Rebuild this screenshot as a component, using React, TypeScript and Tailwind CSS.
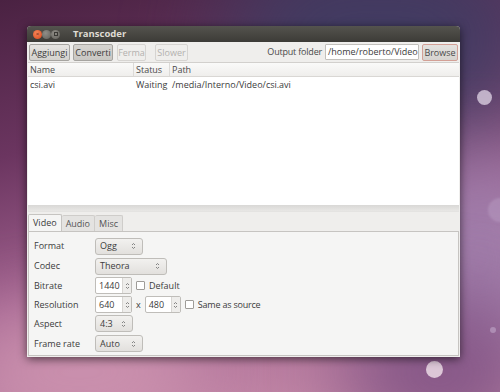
import React from "react";

const font = { fontFamily: '"Open Sans", "DejaVu Sans", sans-serif' };

function Btn({ children, disabled, pressed, w, accent }: { children: React.ReactNode; disabled?: boolean; pressed?: boolean; w: string; accent?: boolean }) {
  const base = "h-[17px] flex items-center justify-center rounded-[2px] text-[9px] leading-none border ";
  let cls = base;
  if (disabled) cls += "border-[#d6d4d1] text-[#b3b1ae] bg-[#efeeec]";
  else if (accent) cls += "border-[#d3a096] text-[#4a4a4a] bg-[linear-gradient(#e4e2df,#d6d3cf)]";
  else if (pressed) cls += "border-[#a6a4a0] text-[#3c3c3c] bg-[linear-gradient(#d6d4d0,#c9c7c3)]";
  else cls += "border-[#a6a4a0] text-[#3c3c3c] bg-[linear-gradient(#e6e4e1,#d4d2ce)]";
  return <div className={cls + " " + w}>{children}</div>;
}

function Arrows() {
  return (
    <svg width="5" height="8" viewBox="0 0 5 8" className="shrink-0">
      <path d="M1 3 L2.5 1.5 L4 3" fill="none" stroke="#777" strokeWidth="0.9" />
      <path d="M1 5 L2.5 6.5 L4 5" fill="none" stroke="#777" strokeWidth="0.9" />
    </svg>
  );
}

function Select({ value, w }: { value: string; w: string }) {
  return (
    <div className={"h-[17px] flex items-center justify-between pl-[4px] pr-[6px] rounded-[3px] border border-[#bfbdb9] bg-[linear-gradient(#f2f1ef,#e2e0dd)] text-[9px] text-[#3c3c3c] " + w}>
      <span>{value}</span>
      <Arrows />
    </div>
  );
}

function Spin({ value, w }: { value: string; w: string }) {
  return (
    <div className={"h-[17px] flex items-stretch rounded-[2px] border border-[#bfbdb9] bg-white text-[9px] text-[#3c3c3c] " + w}>
      <div className="flex-1 flex items-center pl-[3px]">{value}</div>
      <div className="w-[9px] flex items-center justify-center bg-[#eeedeb] border-l border-[#d8d6d3]">
        <Arrows />
      </div>
    </div>
  );
}

function Check() {
  return <div className="w-[9px] h-[9px] border border-[#9e9c98] bg-white rounded-[1px]" />;
}

function Row({ label, children, h }: { label: string; children: React.ReactNode; h: string }) {
  return (
    <div className={"flex items-center " + h}>
      <div className="w-[61px] text-[9px] text-[#3c3c3c]">{label}</div>
      <div className="flex items-center">{children}</div>
    </div>
  );
}

export default function App() {
  return (
    <div
      className="relative w-[500px] h-[392px] overflow-hidden bg-[linear-gradient(165deg,#4a2242_0%,#6b3560_30%,#a26390_60%,#c98fab_100%)]"
      style={font}
    >
      {/* wallpaper tints */}
      <div className="absolute -top-[60px] right-[-40px] w-[320px] h-[200px] rounded-full bg-[#3d3d63] blur-[50px] opacity-90" />
      <div className="absolute top-[150px] right-[-60px] w-[160px] h-[220px] rounded-full bg-[#9e82b0] blur-[40px] opacity-80" />
      <div className="absolute bottom-[-60px] right-[-40px] w-[200px] h-[160px] rounded-full bg-[#7b4d80] blur-[40px] opacity-80" />
      <div className="absolute bottom-[-40px] left-[-40px] w-[240px] h-[120px] rounded-full bg-[#d39ab4] blur-[40px] opacity-80" />
      {/* bokeh */}
      <div className="absolute left-[477px] top-[90px] w-[15px] h-[15px] rounded-full bg-[#d9cde0] opacity-80" />
      <div className="absolute left-[488px] top-[198px] w-[24px] h-[24px] rounded-full bg-[#c9b3d4] opacity-30 blur-[1px]" />
      <div className="absolute left-[490px] top-[327px] w-[6px] h-[6px] rounded-full bg-[#c9b3d4] opacity-50" />
      <div className="absolute left-[426px] top-[361px] w-[17px] h-[17px] rounded-full bg-[#e6d3e0] opacity-90" />

      {/* window */}
      <div className="relative ml-[27px] mt-[26px] w-[433px] h-[331px] flex flex-col rounded-t-[4px] shadow-[0_2px_10px_rgba(0,0,0,0.6)] bg-[#efeeec]">
        {/* title bar */}
        <div className="h-[16px] flex items-center rounded-t-[4px] bg-[linear-gradient(#54534e,#3c3b37)] pl-[6px]">
          <div className="flex items-center gap-[0px]">
            <div className="w-[9px] h-[9px] rounded-full bg-[radial-gradient(circle_at_40%_35%,#f5875a,#d8461a)] flex items-center justify-center text-[6px] leading-none text-[#5a2010]">×</div>
            <div className="w-[9px] h-[9px] rounded-full bg-[radial-gradient(circle_at_40%_35%,#908e88,#5f5e59)]" />
            <div className="w-[9px] h-[9px] rounded-full bg-[radial-gradient(circle_at_40%_35%,#908e88,#5f5e59)] flex items-center justify-center">
              <div className="w-[4px] h-[4px] border border-[#3a3935]" />
            </div>
          </div>
          <div className="ml-[13px] text-[9.5px] font-bold text-[#dfdbd2]">Transcoder</div>
        </div>

        {/* toolbar */}
        <div className="h-[20px] flex items-center pl-[2px] pr-[2px] bg-[#efeeec]">
          <Btn w="w-[41px]">Aggiungi</Btn>
          <div className="w-[3px]" />
          <Btn w="w-[40px]" pressed>Converti</Btn>
          <div className="w-[4px]" />
          <Btn w="w-[29px]" disabled>Ferma</Btn>
          <div className="w-[9px]" />
          <Btn w="w-[33px]" disabled>Slower</Btn>
          <div className="flex-1" />
          <div className="text-[9px] tracking-[-0.2px] text-[#4a4a4a] mr-[3px]">Output folder</div>
          <div className="h-[16px] w-[94px] flex items-center pl-[2px] border border-[#c2c0bc] bg-white text-[9px] text-[#3c3c3c] rounded-[1px]">/home/roberto/Video</div>
          <div className="w-[3px]" />
          <Btn w="w-[36px]" accent>Browse</Btn>
        </div>

        {/* list */}
        <div className="h-[143px] mx-[1px] flex flex-col bg-white border-t border-[#d2d0cd]">
          <div className="h-[14px] flex items-center text-[9px] text-[#4a4a4a] bg-[linear-gradient(#fafaf9,#efeeec)] border-b border-[#d9d7d4]">
            <div className="w-[106px] pl-[2px] border-r border-[#dcdad7] h-full flex items-center">Name</div>
            <div className="w-[36px] pl-[2px] border-r border-[#dcdad7] h-full flex items-center">Status</div>
            <div className="flex-1 pl-[2px]">Path</div>
          </div>
          <div className="h-[15px] flex items-center text-[9px] text-[#3c3c3c]">
            <div className="w-[106px] pl-[2px]">csi.avi</div>
            <div className="w-[36px] pl-[2px]">Waiting</div>
            <div className="flex-1 pl-[2px]">/media/Interno/Video/csi.avi</div>
          </div>
        </div>

        {/* pane handle */}
        <div className="h-[7px] mx-[1px] bg-[linear-gradient(#d9d8d6,#e8e7e5)] border-b border-[#e4e3e1]" />

        {/* tabs */}
        <div className="flex-1 flex flex-col px-[1px] pt-[2px] pb-[1px]">
          <div className="h-[17px] flex items-end">
            <div className="h-[17px] px-[4px] flex items-center text-[9px] text-[#3c3c3c] bg-[#f5f5f4] border border-b-0 border-[#c6c4c1] rounded-t-[2px]">Video</div>
            <div className="h-[16px] px-[4px] flex items-center text-[9px] text-[#555] bg-[#e4e3e1] border border-b-0 border-l-0 border-[#cfcdca] rounded-t-[2px]">Audio</div>
            <div className="h-[16px] px-[4px] flex items-center text-[9px] text-[#555] bg-[#e4e3e1] border border-b-0 border-l-0 border-[#cfcdca] rounded-t-[2px]">Misc</div>
          </div>
          <div className="flex-1 flex flex-col pl-[5px] pt-[4px] bg-[#f5f5f4] border border-[#c6c4c1]">
            <Row label="Format" h="h-[20px]"><Select value="Ogg" w="w-[48px]" /></Row>
            <Row label="Codec" h="h-[20px]"><Select value="Theora" w="w-[72px]" /></Row>
            <Row label="Bitrate" h="h-[19px]">
              <Spin value="1440" w="w-[37px]" />
              <div className="ml-[4px]"><Check /></div>
              <div className="ml-[4px] text-[9px] text-[#3c3c3c]">Default</div>
            </Row>
            <Row label="Resolution" h="h-[19px]">
              <Spin value="640" w="w-[37px]" />
              <div className="mx-[4px] text-[9px] text-[#3c3c3c]">x</div>
              <Spin value="480" w="w-[36px]" />
              <div className="ml-[4px]"><Check /></div>
              <div className="ml-[4px] text-[9px] tracking-[-0.2px] text-[#3c3c3c]">Same as source</div>
            </Row>
            <Row label="Aspect" h="h-[19px]"><Select value="4:3" w="w-[38px]" /></Row>
            <Row label="Frame rate" h="h-[21px]"><Select value="Auto" w="w-[48px]" /></Row>
          </div>
        </div>
      </div>
    </div>
  );
}
